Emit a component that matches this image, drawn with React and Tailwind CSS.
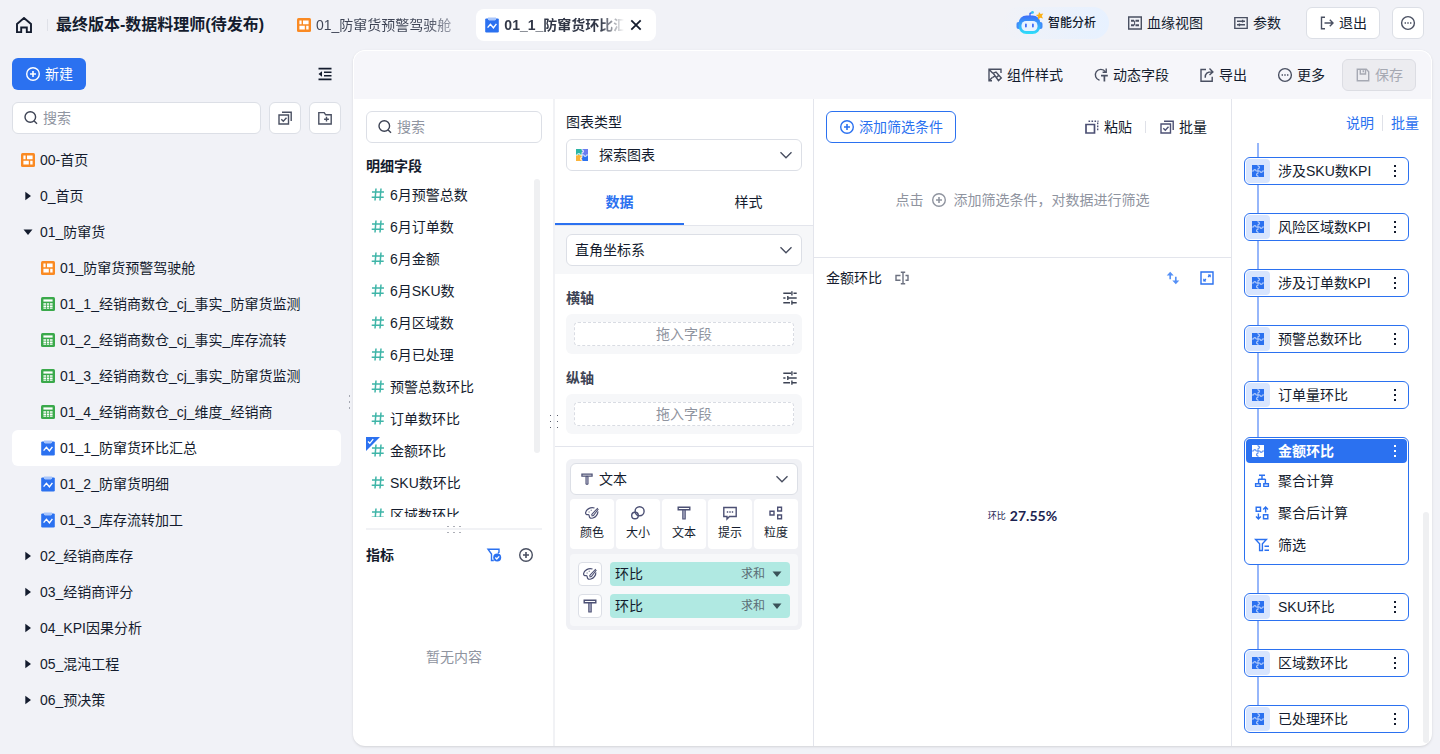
import React, { useState } from 'react';
import clsx from 'clsx';

const icons = {
    home: <path d="M1 7 8 1l7 6v8.2h-4.2v-4.7H5.2v4.7H1z" strokeWidth="1.9" />,
    plusCircle: (
        <>
            <circle cx="8" cy="8" r="6.3" />
            <path d="M8 5v6M5 8h6" strokeWidth="1.6" />
        </>
    ),
    search: (
        <>
            <circle cx="7.3" cy="7" r="5.3" />
            <path d="m11.2 11 2.8 2.8" />
        </>
    ),
    collapse: (
        <>
            <path d="M1.5 2.6h13M7 6.2h7.5M7 9.8h7.5M1.5 13.4h13" strokeWidth="1.6" />
            <path d="M1.5 8 5 5.2v5.6z" fill="currentColor" stroke="none" />
        </>
    ),
    batch: (
        <>
            <path d="M2 5h9.5v9H2z" />
            <path d="m4.3 9.3 2 2 3.2-3.5" />
            <path d="M5 2.3h9.2V11" />
        </>
    ),
    folderPlus: (
        <>
            <path d="M1.8 2.6h5.4l1.5 2.2h5.5V14H1.8z" />
            <path d="M9.5 6.8v4.8M7.1 9.2h4.8" />
        </>
    ),
    close: <path d="m3.3 3.3 9.4 9.4M12.7 3.3l-9.4 9.4" strokeWidth="1.8" />,
    lineage: (
        <>
            <path d="M1.7 2h12.6v12H1.7z" />
            <path d="M4 5.7h3M8.5 5.7H12M4 10.3h3M8.5 10.3H12" strokeWidth="2" />
            <path d="M7.6 5.7v4.6" strokeWidth="1" />
        </>
    ),
    params: (
        <>
            <path d="M1.8 2.6h12.4v10.8H1.8z" />
            <path d="M4 6.2h8M4 9.8h8M9.6 4.8v2.8M6.4 8.4v2.8" />
        </>
    ),
    exit: <path d="M6 2.2H2.5v11.6H6M5.5 8h8M10.8 4.8 14 8l-3.2 3.2" />,
    more: (
        <>
            <circle cx="8" cy="8" r="6.4" />
            <path d="M4.6 8H6M7.3 8h1.4M10 8h1.4" strokeWidth="1.7" />
        </>
    ),
    brush: (
        <>
            <path d="M14 6V2.3H2v11.4h3M2.4 2.7l3.4 3.6M2.2 13.5l3.4-3.3" />
            <path d="M6.2 6.2 9 5l5.3 6-2.8 2.6zM8.2 8.8l-2.4 1.5M11.8 8.4 9 10.8" />
        </>
    ),
    dynamicField: (
        <>
            <path d="M6.5 13.2A5.5 5.5 0 1 1 12.4 4.8" />
            <path d="M13.2 1.6v3.6H9.6" />
            <path d="M8 8.6h6.8M11.4 8.6v5.8" strokeWidth="1.7" />
        </>
    ),
    exportIcon: (
        <>
            <path d="M7 2.5H2v11.7h11.2V9.8" />
            <path d="M6.2 10.8c0-4.6 2-5.9 7-5.9M10.5 1.6l3.4 3.3-3.4 3.2" />
        </>
    ),
    save: (
        <>
            <path d="M2.3 2.3h9l2.4 2.4v9H2.3z" />
            <path d="M5.3 2.5V7h5.2V2.5M8.3 3.3v2" />
        </>
    ),
    paste: (
        <>
            <path d="M2 5.5h8.5V14H2z" strokeWidth="1.7" />
            <path d="M4.5 2.3h10M13.7 3.6V12" strokeDasharray="1.6 1.4" />
        </>
    ),
    chevron: <path d="m2.5 5.3 5.5 5.5 5.5-5.5" />,
    sliders: <path d="M1.3 3.3H9M11.5 3.3h3.2M1.3 8h2.2M6 8h8.7M1.3 12.7H8M10.5 12.7h4.2M9.9 1.2v4.2M5.8 5.9v4.2M9.9 10.6v4.2" />,
    text: (
        <>
            <path d="M2.2 2.3h11.6v2.5H2.2z" />
            <path d="M6.8 5h2.4v9H6.8z" fill="#b3b5cc" strokeWidth="1.1" />
        </>
    ),
    palette: (
        <>
            <path d="M10.5 3C6.5 1.6 2 4.5 1.6 7.6c-.3 2 1.3 2.1 2.6 2 1.5-.1.6 1.800 1.600 3 1.200 1.400 4.800.4 6.600-2 1-1.300 1.600-2.800 1.400-4.200" strokeWidth="1.2" />
            <path d="M13.8 3 7.8 9.5l.3 1.3 1.3-.3 5-6.500M4.600 7h1M6.700 5.200h1" strokeWidth="1.1" />
        </>
    ),
    size: (
        <>
            <circle cx="9.6" cy="6.2" r="4.5" />
            <circle cx="5" cy="10.5" r="3.3" />
        </>
    ),
    tip: (
        <>
            <path d="M1.8 2.5h12.4v9H7.5L5 14v-2.5H1.8z" />
            <path d="M4.8 7h1.4M7.3 7h1.4M9.8 7h1.4" />
        </>
    ),
    grain: <path d="M2 6.2h4V10H2zM9.7 2.3h3.8V6H9.7zM9.7 10h3.8v3.7H9.7z" />,
    rename: <path d="M6.5 5.5H2v4.8h4.5M11.5 5.5H14v4.8h-2.5M9 2.3v11.4M6.8 2.3h4.4M6.8 13.7h4.4" />,
    swap: (
        <>
            <path d="M4.8 9.5v-6M11.2 6.5v6" strokeWidth="1.9" />
            <path d="M4.8.8.8 5.2h8zM11.2 15.2l4-4.4h-8z" fill="currentColor" stroke="none" />
        </>
    ),
    expand: (
        <>
            <path d="M2 2h12v12H2z" />
            <path d="M9 5h2.200v2.200M11 5.200 9 7.200M7 11H4.800V8.800M5 10.800l2-2" strokeWidth="1.1" />
        </>
    ),
    aggregate: <path d="M5 2.3h6M8 2.5v3.7M4.6 6.2h6.8M4.6 6v4.5M11.4 6v4.5M1.6 10.8h4.6v2.6H1.6zM9.8 10.8h4.6v2.6H9.8z" />,
    postAggregate: <path d="M2.2 2.2h4.3v4H2.2zM9.5 9.8h4.3v4H9.5zM11.6 7.5V2.2M9.2 4.5l2.4-2.4L14 4.5M4.4 8.5v5.3M2 11.5l2.4 2.4 2.4-2.400" />,
    filter: <path d="M1.600 2.500h10.800L8.400 6.800v6.700H5.600V6.800zM10.500 9.300H15M10.500 13.200H15" />,
};

function Icon({ name, className }) {
    return (
        <svg
            viewBox="0 0 16 16"
            className={clsx('shrink-0', className || 'size-4')}
            fill="none"
            stroke="currentColor"
            strokeWidth="1.4"
            aria-hidden="true"
        >
            {icons[name]}
        </svg>
    );
}

function DashboardIcon() {
    return (
        <svg viewBox="0 0 16 16" className="size-4 shrink-0" aria-hidden="true">
            <rect x="1" y="1" width="14" height="14" rx="1.5" fill="#fa8a23" />
            <path d="M3.4 3.6h2.2v3.6H3.4zM7 3.6h5.6v3.6H7zM3.4 8.8h5.4v3.6H3.4zM10.2 8.8h2.4v3.6h-2.4z" fill="#fff" />
        </svg>
    );
}

function TableIcon() {
    return (
        <svg viewBox="0 0 16 16" className="size-4 shrink-0" aria-hidden="true">
            <rect x="1" y="1" width="14" height="14" rx="1.5" fill="#3aa94b" />
            <path d="M3.4 3.4h9.2v2.2H3.4z" fill="#fff" />
            <path d="M3.4 7.2H6v1.6H3.4zM6.8 7.2h2.4v1.6H6.8zM10 7.2h2.6v1.6H10zM3.4 9.4H6V11H3.4zM6.8 9.4h2.4V11H6.8zM10 9.4h2.6V11H10zM3.4 11.6H6v1.2H3.4zM6.8 11.6h2.4v1.2H6.8zM10 11.6h2.6v1.2H10z" fill="#fff" />
        </svg>
    );
}

function FlowIcon() {
    return (
        <svg viewBox="0 0 16 16" className="size-4 shrink-0" aria-hidden="true">
            <rect x="1.2" y="1.4" width="13.6" height="14" rx="1.2" fill="#2b71f0" />
            <path d="M4 .4h8v1.8l-1 1.2H5L4 2.2z" fill="#a9c6fb" />
            <path d="m3.6 10.6 2.8-3.2 3 3.4 3-4" fill="none" stroke="#fff" strokeWidth="1.4" />
        </svg>
    );
}

// four interlocking tiles; top-left, top-right, bottom-left, bottom-right
function PuzzleIcon({ colors, gap }) {
    return (
        <svg viewBox="0 0 12 12" className="size-3 shrink-0" aria-hidden="true">
            <path d="M0 0h6v6H0z" fill={colors[0]} />
            <path d="M6 0h6v6H6z" fill={colors[1]} />
            <path d="M0 6h6v6H0z" fill={colors[2]} />
            <path d="M6 6h6v6H6z" fill={colors[3]} />
            <path
                d="M6 0v1.3h1.4v2H6V6M0 6h1.8V4.7h2V6H6v2.7H4.6v2H6V12M6 6h2.2v1.3h2V6H12"
                fill="none"
                stroke={gap}
                strokeWidth="0.8"
            />
        </svg>
    );
}

function RobotIcon() {
    return (
        <svg viewBox="0 0 28 26" className="h-[26px] w-7" aria-hidden="true">
            <defs>
                <linearGradient id="robot" x1="0" y1="0" x2="0" y2="1">
                    <stop offset="0" stopColor="#3d6cf8" />
                    <stop offset="1" stopColor="#2fe0fa" />
                </linearGradient>
            </defs>
            <path d="M14 6V3.5l2-1" stroke="#3d6cf8" strokeWidth="1.4" fill="none" />
            <circle cx="16.5" cy="2.4" r="1.4" fill="#35c3f0" />
            <rect x="0.5" y="12" width="4" height="7" rx="2" fill="#3f8cfa" />
            <rect x="22.5" y="12" width="4" height="7" rx="2" fill="#3f8cfa" />
            <rect x="2.5" y="5.5" width="22" height="18.5" rx="8" fill="url(#robot)" />
            <rect x="5.5" y="11" width="16" height="10" rx="4.5" fill="#e9f3ff" />
            <rect x="9" y="13.5" width="1.8" height="4" rx="0.9" fill="#3d6cf8" />
            <rect x="16" y="13.5" width="1.8" height="4" rx="0.9" fill="#3d6cf8" />
            <path d="m23 2 1.6 2 2.7-.5-1.5 2.4L27 8.500l-2.600-.8L22 9.500l.1-2.800-2.200-1.600 2.600-.6z" fill="#fbb017" />
        </svg>
    );
}

function Caret({ open }) {
    return (
        <svg viewBox="0 0 16 16" className="size-4 shrink-0" fill="currentColor" aria-hidden="true">
            {open ? <path d="M3.5 5.5h9L8 11z" /> : <path d="M5.3 3.8v8.4L11 8z" />}
        </svg>
    );
}

function GripDots({ className, count }) {
    return (
        <div className={className}>
            {Array.from({ length: count }).map((_, i) => (
                <span key={i} className="size-px bg-[#5a5f6e]" />
            ))}
        </div>
    );
}

const tree = [
    { label: '00-首页', type: 'dashboard' },
    { label: '0_首页', type: 'folder' },
    { label: '01_防窜货', type: 'folder', open: true },
    { label: '01_防窜货预警驾驶舱', type: 'dashboard', child: true },
    { label: '01_1_经销商数仓_cj_事实_防窜货监测', type: 'table', child: true },
    { label: '01_2_经销商数仓_cj_事实_库存流转', type: 'table', child: true },
    { label: '01_3_经销商数仓_cj_事实_防窜货监测', type: 'table', child: true },
    { label: '01_4_经销商数仓_cj_维度_经销商', type: 'table', child: true },
    { label: '01_1_防窜货环比汇总', type: 'flow', child: true },
    { label: '01_2_防窜货明细', type: 'flow', child: true },
    { label: '01_3_库存流转加工', type: 'flow', child: true },
    { label: '02_经销商库存', type: 'folder' },
    { label: '03_经销商评分', type: 'folder' },
    { label: '04_KPI因果分析', type: 'folder' },
    { label: '05_混沌工程', type: 'folder' },
    { label: '06_预决策', type: 'folder' },
];

const fields = [
    '6月预警总数',
    '6月订单数',
    '6月金额',
    '6月SKU数',
    '6月区域数',
    '6月已处理',
    '预警总数环比',
    '订单数环比',
    '金额环比',
    'SKU数环比',
    '区域数环比',
];

const marks = [
    { icon: 'palette', label: '颜色' },
    { icon: 'size', label: '大小' },
    { icon: 'text', label: '文本' },
    { icon: 'tip', label: '提示' },
    { icon: 'grain', label: '粒度' },
];

const nodes = [
    '涉及SKU数KPI',
    '风险区域数KPI',
    '涉及订单数KPI',
    '预警总数环比',
    '订单量环比',
    '金额环比',
    'SKU环比',
    '区域数环比',
    '已处理环比',
];

const steps = [
    { icon: 'aggregate', label: '聚合计算' },
    { icon: 'postAggregate', label: '聚合后计算' },
    { icon: 'filter', label: '筛选' },
];

const BLUE = '#2b71f0';

function Header() {
    return (
        <header className="flex h-[50px] shrink-0 items-center">
            <div className="flex min-w-0 flex-1 items-center">
                <a href="#home" aria-label="首页" className="ml-4">
                    <Icon name="home" />
                </a>
                <span className="ml-[15px] h-3 w-px bg-[#dfe1e8]" />
                <h1 className="ml-2 text-base font-bold whitespace-nowrap">最终版本-数据料理师(待发布)</h1>
                <nav className="ml-5 flex items-center gap-[13px]">
                    <a href="#dashboard" className="flex h-8 items-center gap-1 px-3 whitespace-nowrap text-[#3d4354]">
                        <DashboardIcon />
                        <span className="bg-gradient-to-r from-[#3d4354] from-80% to-[#9a9eab] bg-clip-text text-transparent">
                            01_防窜货预警驾驶舱
                        </span>
                    </a>
                    <div className="flex h-8 w-[180px] items-center rounded-lg bg-white pr-3 pl-2">
                        <a href="#flow" className="flex min-w-0 flex-1 items-center gap-1 font-bold whitespace-nowrap">
                            <FlowIcon />
                            <span className="overflow-hidden bg-gradient-to-r from-[#303646] from-80% to-transparent bg-clip-text text-transparent">
                                01_1_防窜货环比汇总
                            </span>
                        </a>
                        <button type="button" aria-label="关闭" className="ml-1">
                            <Icon name="close" />
                        </button>
                    </div>
                </nav>
            </div>
            <div className="flex shrink-0 items-center pr-4 pb-1">
                <button
                    type="button"
                    className="mr-[3px] flex h-8 items-center gap-1 rounded-full bg-gradient-to-r from-[#f1f2f7] to-[#e7f1ff] pr-[13px] pl-[14px] text-xs font-medium"
                >
                    <RobotIcon />
                    智能分析
                </button>
                <ToolButton icon="lineage" label="血缘视图" />
                <ToolButton icon="params" label="参数" />
                <button type="button" className="ml-[10px] flex h-8 items-center gap-1 rounded-md border border-[#dcdfe6] bg-white px-3">
                    <Icon name="exit" className="size-4 text-[#4a5062]" />
                    退出
                </button>
                <button type="button" aria-label="更多" className="ml-3 flex size-8 items-center justify-center rounded-md border border-[#dcdfe6] bg-white">
                    <Icon name="more" className="size-4 text-[#4a5062]" />
                </button>
            </div>
        </header>
    );
}

function ToolButton({ icon, label }) {
    return (
        <button type="button" className="flex h-8 items-center gap-1 px-[15px] whitespace-nowrap">
            <Icon name={icon} className="size-4 text-[#4a5062]" />
            {label}
        </button>
    );
}

function SearchBox({ id, className }) {
    return (
        <div className={clsx('flex h-8 items-center gap-1 rounded-md border border-[#dcdfe6] bg-white px-[10px]', className)}>
            <label htmlFor={id} aria-label="搜索">
                <Icon name="search" className="size-4 text-[#3d4354]" />
            </label>
            <input
                id={id}
                type="text"
                placeholder="搜索"
                className="min-w-0 flex-1 bg-transparent outline-none placeholder:text-[#9095a1]"
            />
        </div>
    );
}

function TreeItem({ item, active, onSelect }) {
    return (
        <li>
            <button
                type="button"
                onClick={onSelect}
                className={clsx(
                    'flex h-9 w-full items-center gap-1 rounded-md pr-2 text-left whitespace-nowrap',
                    item.child ? 'pl-7' : 'pl-2',
                    active && 'bg-white'
                )}
            >
                {item.type === 'dashboard' && <DashboardIcon />}
                {item.type === 'table' && <TableIcon />}
                {item.type === 'flow' && <FlowIcon />}
                {item.type === 'folder' && <Caret open={item.open} />}
                {item.label}
            </button>
        </li>
    );
}

function Sidebar() {
    const [selected, setSelected] = useState('01_1_防窜货环比汇总');

    return (
        <aside className="relative w-[353px] shrink-0 px-3 pt-2">
            <div className="flex items-center justify-between pr-2">
                <button type="button" className="flex h-8 items-center gap-1 rounded-md bg-[#2b71f0] px-[13px] text-white">
                    <Icon name="plusCircle" />
                    新建
                </button>
                <button type="button" aria-label="收起">
                    <Icon name="collapse" />
                </button>
            </div>
            <div className="mt-3 flex gap-2">
                <SearchBox id="tree-search" className="min-w-0 flex-1" />
                <button type="button" aria-label="批量" className="flex size-8 items-center justify-center rounded-md border border-[#dcdfe6] bg-white text-[#4a5062]">
                    <Icon name="batch" />
                </button>
                <button type="button" aria-label="新建文件夹" className="flex size-8 items-center justify-center rounded-md border border-[#dcdfe6] bg-white text-[#4a5062]">
                    <Icon name="folderPlus" />
                </button>
            </div>
            <ul className="mt-2">
                {tree.map((item) => (
                    <TreeItem
                        key={item.label}
                        item={item}
                        active={selected === item.label}
                        onSelect={() => setSelected(item.label)}
                    />
                ))}
            </ul>
            <GripDots className="absolute top-1/2 right-[3px] grid -translate-y-1/2 grid-cols-1 gap-[5px]" count={3} />
        </aside>
    );
}

function FieldPanel() {
    return (
        <section className="flex w-[202px] shrink-0 flex-col border-r-2 border-[#f1f2f5] pr-[11px] pl-[13px]">
            <SearchBox id="field-search" className="mt-3 shrink-0" />
            <h2 className="mt-3 font-bold">明细字段</h2>
            <div className="mt-0.5 mb-[11px] flex min-h-0 flex-1 overflow-hidden">
                <ul className="flex-1">
                    {fields.map((field) => (
                        <li key={field} className="relative flex h-8 items-center gap-1 pl-1">
                            {field === '金额环比' && (
                                <svg viewBox="0 0 14 14" className="absolute top-0.5 left-0 size-[14px]" aria-hidden="true">
                                    <path d="M0 0h14L0 14z" fill={BLUE} />
                                    <path d="m2 4.5 1.8 1.8 3.4-4.1" fill="none" stroke="#fff" strokeWidth="1.3" />
                                </svg>
                            )}
                            <svg viewBox="0 0 16 16" className="relative size-4" fill="none" stroke="#3fb5a8" strokeWidth="1.5" aria-hidden="true">
                                <path d="M2 5h12M1.7 10.2h12M6 1.5l-1 12M11 1.5l-1 12" />
                            </svg>
                            {field}
                        </li>
                    ))}
                </ul>
                <div className="mr-0.5 h-[274px] w-1.5 rounded-full bg-[#eff0f2]" />
            </div>
            <div className="relative flex h-[218px] shrink-0 flex-col border-t-2 border-[#f1f2f5]">
                <GripDots className="absolute -top-1 left-1/2 grid -translate-x-1/2 grid-cols-3 gap-[5px]" count={6} />
                <div className="mt-[14px] flex items-center justify-between">
                    <h2 className="font-bold">指标</h2>
                    <div className="flex gap-4 pr-2">
                        <button type="button" aria-label="筛选指标">
                            <svg viewBox="0 0 16 16" className="size-4" fill="none" stroke={BLUE} strokeWidth="1.4" aria-hidden="true">
                                <path d="M7.8 13.5H5.500V7L2 2.200h11v3l-1 1.200" />
                                <circle cx="11.2" cy="10.6" r="4" fill={BLUE} stroke="none" />
                                <path d="m9.3 10.5 1.5 1.5 2.4-2.6" stroke="#fff" />
                            </svg>
                        </button>
                        <button type="button" aria-label="新建指标">
                            <Icon name="plusCircle" className="size-4 text-[#4a5062]" />
                        </button>
                    </div>
                </div>
                <p className="flex flex-1 items-center justify-center pt-0.5 text-[#8f949f]">暂无内容</p>
            </div>
        </section>
    );
}

function SelectBox({ id, label, option, icon, padding }) {
    return (
        <div className="relative">
            {icon && <span className="pointer-events-none absolute inset-y-0 left-[10px] flex items-center">{icon}</span>}
            <select
                id={id}
                aria-label={label}
                className={clsx('h-8 w-full appearance-none rounded-md border border-[#dcdfe6] bg-white pr-8', padding)}
            >
                <option>{option}</option>
            </select>
            <span className="pointer-events-none absolute inset-y-0 right-2 flex items-center text-[#4a5062]">
                <Icon name="chevron" />
            </span>
        </div>
    );
}

function AxisDrop({ title }) {
    return (
        <div className="flex flex-col gap-[5px]">
            <div className="flex items-center justify-between pr-1 text-[#3d4354]">
                <h3 className="font-bold">{title}</h3>
                <button type="button" aria-label={title + '设置'}>
                    <Icon name="sliders" />
                </button>
            </div>
            <div className="rounded-md bg-[#f6f7f9] p-2">
                <div className="flex h-6 items-center justify-center rounded border border-dashed border-[#d9dce3] bg-white text-[#8f949f]">
                    拖入字段
                </div>
            </div>
        </div>
    );
}

function ConfigPanel() {
    const [tab, setTab] = useState('数据');

    return (
        <section className="relative w-[259px] shrink-0 border-r border-[#e3e5ec]">
            <div className="px-[11px] pt-3">
                <label htmlFor="chart-type" className="block">图表类型</label>
                <div className="mt-1.5">
                    <SelectBox
                        id="chart-type"
                        option="探索图表"
                        padding="pl-8"
                        icon={<PuzzleIcon colors={['#2bb5a5', '#6a7cf0', '#fbb43a', '#2b71f0']} gap="#fff" />}
                    />
                </div>
            </div>
            <div className="mt-2 flex border-b border-[#e3e5ec]" role="tablist">
                {['数据', '样式'].map((name) => (
                    <button
                        key={name}
                        type="button"
                        role="tab"
                        aria-selected={tab === name}
                        onClick={() => setTab(name)}
                        className={clsx(
                            'h-[46px] flex-1 border-b-2 pt-0.5',
                            tab === name ? 'border-[#2b71f0] font-bold text-[#2b71f0]' : 'border-transparent'
                        )}
                    >
                        {name}
                    </button>
                ))}
            </div>
            <div className="bg-[#f6f7f9] px-[11px] py-2">
                <SelectBox id="coordinate" label="坐标系" option="直角坐标系" padding="pl-2" />
            </div>
            <div className="flex flex-col gap-[13px] border-b border-[#e3e5ec] px-[11px] pt-[13px] pb-3">
                <AxisDrop title="横轴" />
                <AxisDrop title="纵轴" />
            </div>
            <div className="px-[11px] pt-3">
                <div className="rounded-md bg-[#f0f1f5] p-1">
                    <SelectBox
                        id="mark-type"
                        label="标记"
                        option="文本"
                        padding="pl-7"
                        icon={<Icon name="text" className="size-[14px] text-[#4c5074]" />}
                    />
                    <div className="mt-1 grid grid-cols-5 gap-0.5">
                        {marks.map((mark) => (
                            <button
                                key={mark.label}
                                type="button"
                                className="flex h-[50px] flex-col items-center gap-1 rounded bg-white pt-1.5 text-xs"
                            >
                                <Icon name={mark.icon} className="size-4 text-[#4c5074]" />
                                {mark.label}
                            </button>
                        ))}
                    </div>
                    <div className="mt-[5px] flex flex-col gap-2 rounded bg-[#f7f8fa] p-2">
                        {['palette', 'text'].map((icon) => (
                            <div key={icon} className="flex items-center gap-2">
                                <button type="button" aria-label="标记类型" className="flex size-6 items-center justify-center rounded border border-[#dcdfe6] bg-white">
                                    <Icon name={icon} className="size-4 text-[#4c5074]" />
                                </button>
                                <button type="button" className="flex h-6 flex-1 items-center rounded bg-[#b0e9e2] px-[5px]">
                                    环比
                                    <span className="ml-auto text-xs text-[#5b6d75]">求和</span>
                                    <span className="ml-1 text-[#3a5258]">
                                        <Caret open />
                                    </span>
                                </button>
                            </div>
                        ))}
                    </div>
                </div>
            </div>
            <GripDots className="absolute top-[316px] left-[-5px] grid grid-cols-2 gap-x-[6px] gap-y-[5px]" count={6} />
        </section>
    );
}

function PreviewPanel() {
    return (
        <section className="flex min-w-0 flex-1 flex-col border-r border-[#e3e5ec]">
            <div className="flex items-center justify-between pt-3 pr-6 pl-3">
                <button type="button" className="flex h-8 items-center gap-1 rounded-md border border-[#2b71f0] px-3 text-[#2b71f0]">
                    <Icon name="plusCircle" />
                    添加筛选条件
                </button>
                <div className="flex items-center">
                    <button type="button" className="flex items-center gap-1">
                        <Icon name="paste" className="size-4 text-[#4c5074]" />
                        粘贴
                    </button>
                    <span className="mx-[13px] h-3 w-px bg-[#dfe1e8]" />
                    <button type="button" className="flex items-center gap-1">
                        <Icon name="batch" className="size-4 text-[#4c5074]" />
                        批量
                    </button>
                </div>
            </div>
            <div className="flex h-[115px] shrink-0 items-center justify-center border-b border-[#e3e5ec] text-[#8f949f]">
                点击
                <Icon name="plusCircle" className="mx-[7px] size-4" />
                添加筛选条件，对数据进行筛选
            </div>
            <div className="flex h-10 shrink-0 items-center pr-4 pl-3">
                <h2>金额环比</h2>
                <button type="button" aria-label="重命名" className="ml-3 text-[#6c7180]">
                    <Icon name="rename" />
                </button>
                <button type="button" aria-label="排序" className="mr-[19px] ml-auto text-[#5590f6]">
                    <Icon name="swap" className="size-[14px]" />
                </button>
                <button type="button" aria-label="全屏" className="text-[#2b71f0]">
                    <Icon name="expand" />
                </button>
            </div>
            <div className="flex flex-1 items-center justify-center gap-1 pb-3 text-[#1b2250]">
                <span className="text-[9px]">环比</span>
                <span className="font-['Lato'] text-sm font-bold">27.55%</span>
            </div>
        </section>
    );
}

function MoreDots() {
    return (
        <svg viewBox="0 0 16 16" className="size-4" fill="currentColor" aria-hidden="true">
            <path d="M7 2h2v2H7zM7 7h2v2H7zM7 12h2v2H7z" />
        </svg>
    );
}

function FlowNode({ label }) {
    const active = label === '金额环比';

    return (
        <li className="relative rounded-md border border-[#2b71f0] bg-white p-px">
            <div className={clsx('flex h-6 items-center rounded pr-1', active && 'bg-[#2b71f0] font-bold text-white')}>
                <span className={clsx('flex size-6 items-center justify-center rounded', !active && 'bg-[#d8e5fe]')}>
                    <PuzzleIcon
                        colors={active ? ['#fff', '#fff', '#fff', '#fff'] : [BLUE, BLUE, BLUE, BLUE]}
                        gap={active ? BLUE : '#d8e5fe'}
                    />
                </span>
                <span className="ml-2 flex-1 whitespace-nowrap">{label}</span>
                <button type="button" aria-label="更多操作">
                    <MoreDots />
                </button>
            </div>
            {active && (
                <ul className="my-0.5">
                    {steps.map((step) => (
                        <li key={step.label} className="flex h-8 items-center gap-2 pl-2">
                            <Icon name={step.icon} className="size-4 text-[#2b71f0]" />
                            {step.label}
                        </li>
                    ))}
                </ul>
            )}
        </li>
    );
}

function FlowPanel() {
    return (
        <section className="flex w-[200px] shrink-0 flex-col">
            <div className="flex h-11 shrink-0 items-center justify-end pt-1 pr-[13px] text-[#2b71f0]">
                <a href="#help">说明</a>
                <span className="mx-2 h-4 w-px bg-[#dfe1e8]" />
                <a href="#batch">批量</a>
            </div>
            <div className="flex min-h-0 flex-1 overflow-hidden">
                <div className="relative min-w-0 flex-1 pt-[14px] pr-[14px] pl-3">
                    <div className="absolute top-0 bottom-4 left-[25px] w-0.5 bg-[#96b6fa]" />
                    <ul className="flex flex-col gap-7">
                        {nodes.map((node) => (
                            <FlowNode key={node} label={node} />
                        ))}
                    </ul>
                </div>
                <div className="mr-[3px] mb-[3px] h-[231px] w-1.5 self-end rounded-full bg-[#eff0f2]" />
            </div>
        </section>
    );
}

export default function App() {
    return (
        <div className="flex h-screen flex-col overflow-hidden bg-[#f1f2f7] font-['Liberation_Sans','Noto_Sans_CJK_SC',sans-serif] text-sm leading-[22px] text-[#141c2e]">
            <Header />
            <div className="flex min-h-0 flex-1">
                <Sidebar />
                <main className="mr-2 mb-2 flex min-w-0 flex-1 flex-col overflow-hidden rounded-xl bg-white shadow-sm">
                    <div className="flex h-[49px] shrink-0 items-center justify-end rounded-t-xl border border-b-0 border-white bg-[#f6f6fa] pr-[15px]">
                        <ToolButton icon="brush" label="组件样式" />
                        <ToolButton icon="dynamicField" label="动态字段" />
                        <ToolButton icon="exportIcon" label="导出" />
                        <ToolButton icon="more" label="更多" />
                        <button type="button" disabled className="ml-0.5 flex h-8 items-center gap-1 rounded-md border border-[#dcdde3] bg-[#ececf0] px-3 text-[#a6a9b3]">
                            <Icon name="save" />
                            保存
                        </button>
                    </div>
                    <div className="flex min-h-0 flex-1">
                        <FieldPanel />
                        <ConfigPanel />
                        <PreviewPanel />
                        <FlowPanel />
                    </div>
                </main>
            </div>
        </div>
    );
}
